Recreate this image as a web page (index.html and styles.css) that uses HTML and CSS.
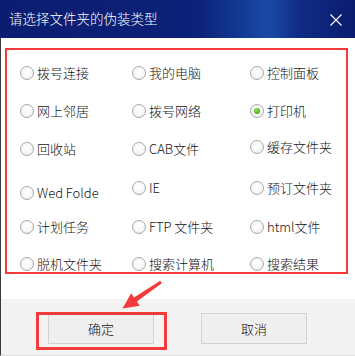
FILE: index.html
```html
<!DOCTYPE html>
<html lang="zh-CN">
<head>
<meta charset="utf-8">
<title>请选择文件夹的伪装类型</title>
<link rel="stylesheet" href="styles.css">
</head>
<body>
<main class="dialog">
  <header class="titlebar">
    <span class="title">请选择文件夹的伪装类型</span>
    <svg class="close" width="12" height="12" viewBox="0 0 12 12"><path d="M0.5 0.5 L11.5 11.5 M11.5 0.5 L0.5 11.5" stroke="#ffffff" stroke-width="1.1" fill="none"/></svg>
  </header>
  <section class="content">
    <div class="options">
      <label class="opt"><span class="radio"></span>拨号连接</label>
      <label class="opt"><span class="radio"></span>我的电脑</label>
      <label class="opt"><span class="radio"></span>控制面板</label>
      <label class="opt"><span class="radio"></span>网上邻居</label>
      <label class="opt"><span class="radio"></span>拨号网络</label>
      <label class="opt"><span class="radio checked"></span>打印机</label>
      <label class="opt"><span class="radio"></span>回收站</label>
      <label class="opt"><span class="radio"></span>CAB文件</label>
      <label class="opt opt-up"><span class="radio"></span>缓存文件夹</label>
      <label class="opt opt-down"><span class="radio"></span>Wed Folde</label>
      <label class="opt"><span class="radio"></span>IE</label>
      <label class="opt"><span class="radio"></span>预订文件夹</label>
      <label class="opt"><span class="radio"></span>计划任务</label>
      <label class="opt"><span class="radio"></span>FTP 文件夹</label>
      <label class="opt"><span class="radio"></span>html文件</label>
      <label class="opt"><span class="radio"></span>脱机文件夹</label>
      <label class="opt"><span class="radio"></span>搜索计算机</label>
      <label class="opt"><span class="radio"></span>搜索结果</label>
    </div>
  </section>
  <footer class="actions">
    <div class="btn-wrap">
      <button class="btn">确定</button>
      <span class="highlight"></span>
    </div>
    <button class="btn">取消</button>
  </footer>
  <svg class="arrow" width="48" height="34" viewBox="118 278 48 34">
    <path d="M160.2 280.8 L161.8 283.2 L136.8 301.6 L139.6 305.7 L122.5 308.5 L131.2 293.3 L134 297.4 Z" fill="#f23a3a"/>
  </svg>
</main>
</body>
</html>
```
FILE: styles.css
```css
* { box-sizing: border-box; margin: 0; padding: 0; }
html, body { width: 355px; height: 356px; overflow: hidden; background: #ffffff; }
body { font-family: "Noto Sans CJK SC", "Noto Sans", sans-serif; font-size: 13px; color: #111; font-weight: 300; }

.dialog { width: 355px; height: 356px; display: flex; flex-direction: column; position: relative; }

.titlebar {
  height: 38px;
  flex: none;
  display: flex;
  align-items: center;
  justify-content: space-between;
  padding: 0 13px 0 9px;
  background: linear-gradient(90deg, #0b1d70 0%, #0c2178 55%, #123a94 68%, #1a4aa6 76%, #0f2c86 84%, #0a1c6e 100%);
}
.title { color: #ffffff; font-size: 13.5px; line-height: 1; }
.close { display: block; margin-top: 1px; }

.content {
  flex: 1;
  border-left: 1px solid #3a3a3a;
  padding: 10px 7px 0 4px;
  background: #ffffff;
}

.options {
  border: 2px solid #f43a3a;
  height: 226px;
  padding: 15px 0 0 13px;
  display: grid;
  grid-template-columns: 112px 118px 1fr;
  grid-template-rows: 38px 37.5px 39.5px 39px 37px 16px;
  align-items: start;
}

.opt {
  display: flex;
  align-items: center;
  height: 16px;
  gap: 3px;
  white-space: nowrap;
  line-height: 16px;
  color: #141414;
}
.opt-down { margin-top: 5px; }
.opt-up { margin-top: -2px; }

.radio {
  width: 14px;
  height: 14px;
  flex: none;
  border-radius: 50%;
  border: 1px solid #a8a8a8;
  background: radial-gradient(circle at 50% 40%, #ffffff 0%, #f6f6f6 60%, #e4e4e4 100%);
  position: relative;
}
.radio.checked::after {
  content: "";
  position: absolute;
  left: 3px;
  top: 3px;
  width: 6px;
  height: 6px;
  border-radius: 50%;
  background: radial-gradient(circle at 40% 35%, #9be25a 0%, #58b21a 60%, #3f9410 100%);
}

.actions {
  height: 57px;
  flex: none;
  background: #f3f3f3;
  border-left: 1px solid #3a3a3a;
  border-bottom: 1px solid #dedede;
  padding: 14px 0 0 47px;
  display: flex;
  align-items: flex-start;
  gap: 47px;
}

.btn-wrap { position: relative; }

.btn {
  width: 106px;
  height: 31px;
  border: 1px solid #d2d2d2;
  background: #efefef;
  font-family: "Noto Sans CJK SC", "Noto Sans", sans-serif;
  font-size: 13px;
  font-weight: 300;
  color: #111;
  display: flex;
  align-items: center;
  justify-content: center;
}

.highlight {
  position: absolute;
  left: -12px;
  top: -1px;
  width: 131px;
  height: 38px;
  border: 3px solid #f43a3a;
  pointer-events: none;
}

.arrow {
  position: absolute;
  left: 118px;
  top: 278px;
}
```
